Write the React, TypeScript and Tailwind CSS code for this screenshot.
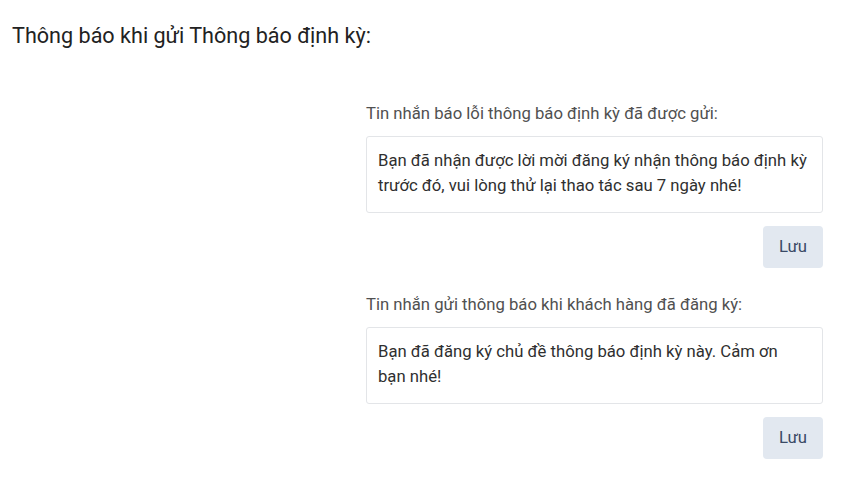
import React from 'react'

const Block: React.FC<{ label: string; text: string }> = ({ label, text }) => (
  <div className="flex flex-col">
    <div className="text-[16.7px] leading-[22px] text-[#505050]">{label}</div>
    <div className="mt-[11px] h-[77px] rounded-[3px] border border-[#e3e5e8] bg-white pl-[11px] pr-[15px] pt-[11px] text-[16.7px] leading-[25px] text-[#2f2f2f]">
      {text}
    </div>
    <div className="mt-[13px] flex justify-end">
      <button className="h-[42px] w-[60px] rounded-[4px] bg-[#e2e8f0] text-[16.7px] text-[#3a4a66]">Lưu</button>
    </div>
  </div>
)

export default function App() {
  return (
    <div
      className="min-h-screen bg-white"
      style={{ fontFamily: 'Roboto, "Noto Sans", sans-serif' }}
    >
      <h1 className="px-3 pt-[22px] text-[21.6px] leading-[28px] text-[#222]">Thông báo khi gửi Thông báo định kỳ:</h1>
      <div className="mt-[53px] flex">
        <div className="w-[366px] shrink-0" />
        <div className="flex w-[457px] flex-col gap-[26px]">
          <Block
            label="Tin nhắn báo lỗi thông báo định kỳ đã được gửi:"
            text="Bạn đã nhận được lời mời đăng ký nhận thông báo định kỳ trước đó, vui lòng thử lại thao tác sau 7 ngày nhé!"
          />
          <Block
            label="Tin nhắn gửi thông báo khi khách hàng đã đăng ký:"
            text="Bạn đã đăng ký chủ đề thông báo định kỳ này. Cảm ơn bạn nhé!"
          />
        </div>
      </div>
    </div>
  )
}
